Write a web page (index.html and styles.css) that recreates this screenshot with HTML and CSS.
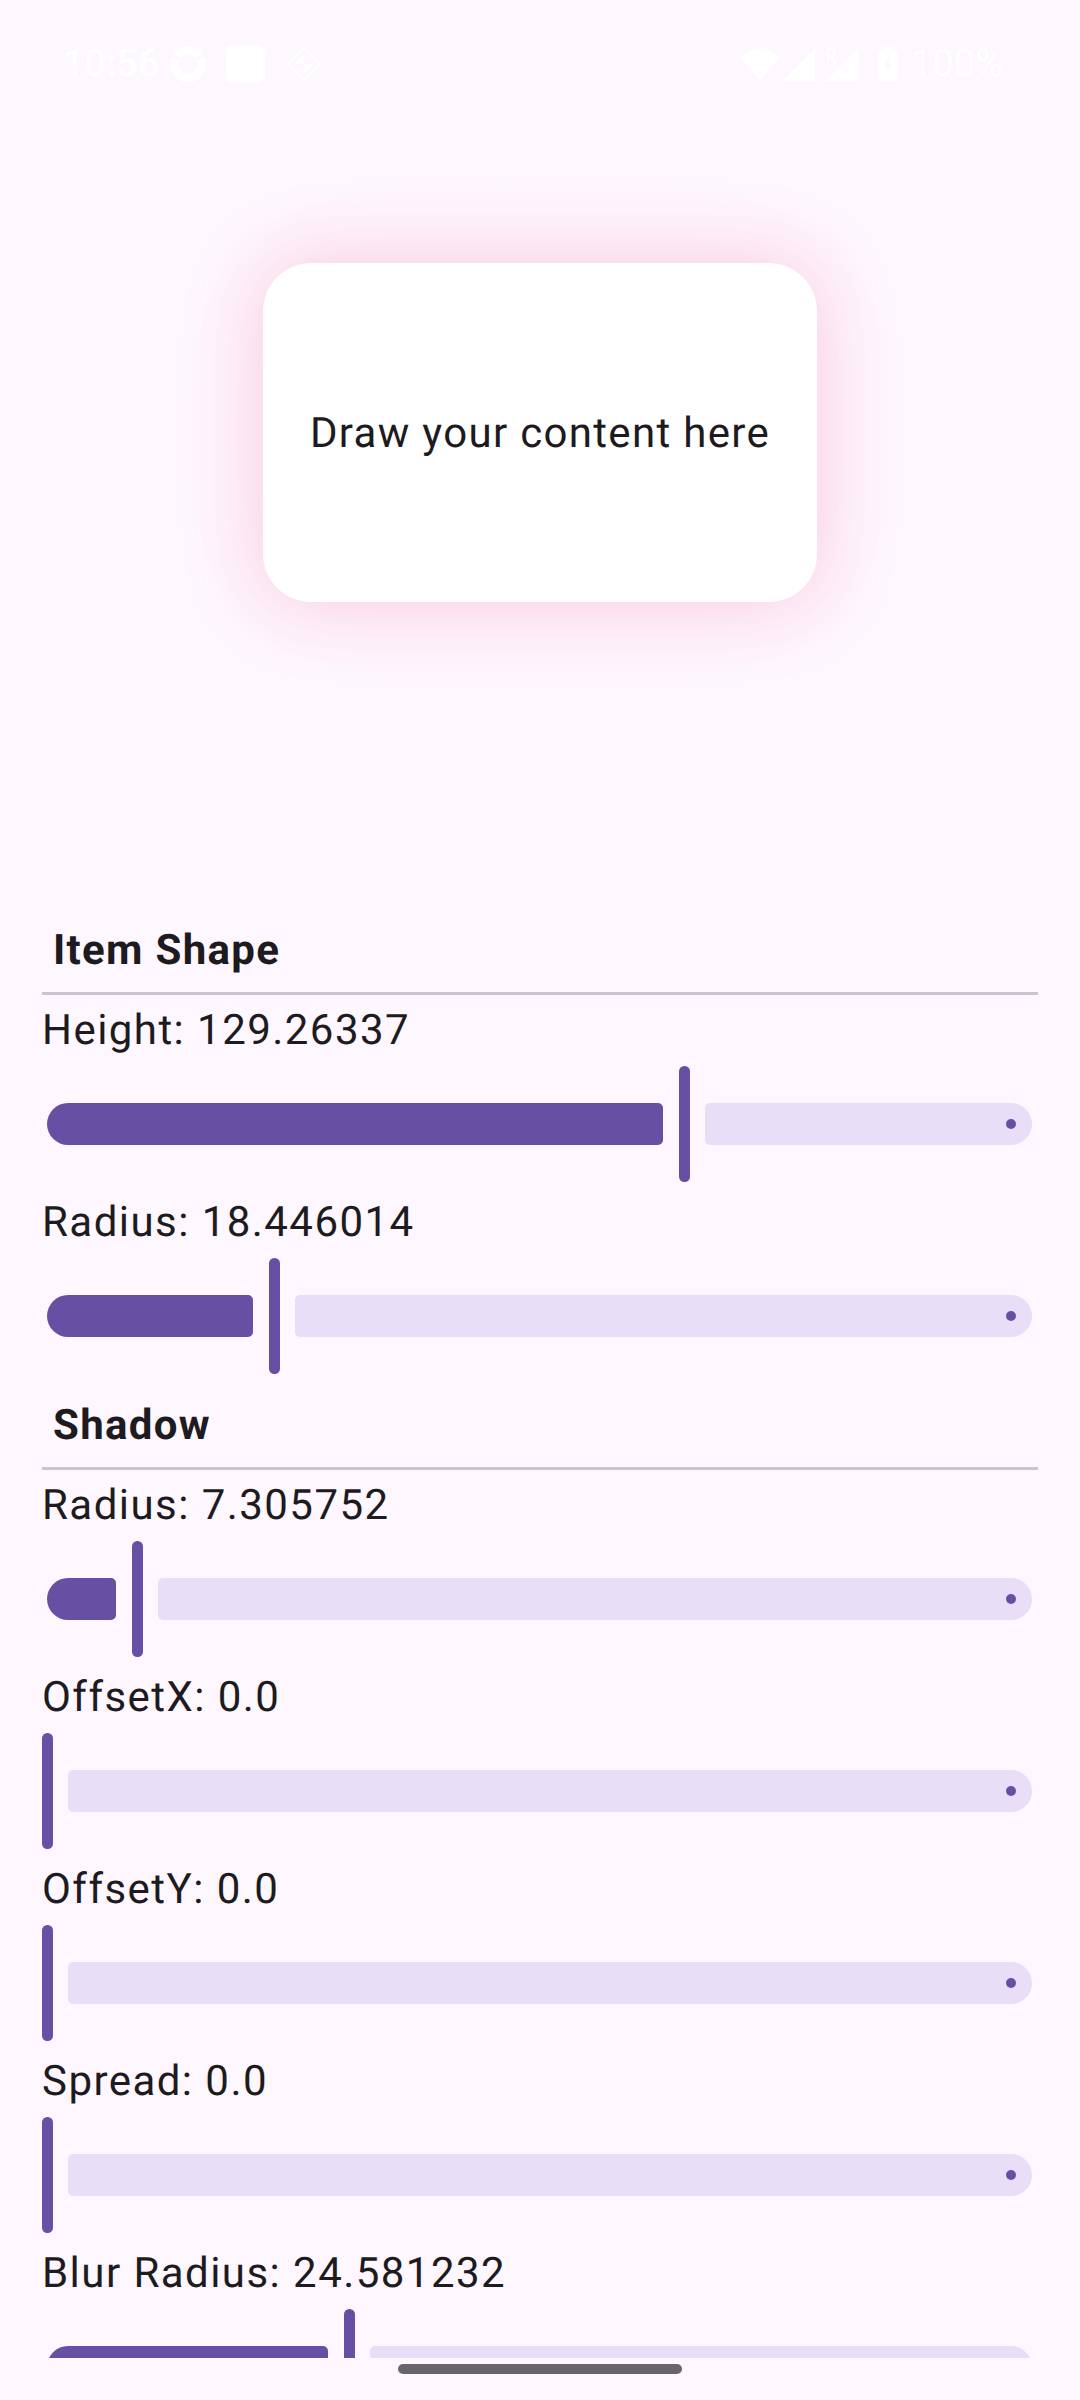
FILE: index.html
```html
<!DOCTYPE html>
<html lang="en">
<head>
<meta charset="utf-8">
<title>Shadow demo</title>
<link rel="stylesheet" href="styles.css">
</head>
<body>
<div class="screen">
  <header class="status-bar">
    <div class="status-left">
      <span class="clock">10:56</span>
      <svg class="ic-ring" width="36" height="36" viewBox="0 0 36 36"><path d="M6.940 10.260A13.500 13.500 0 0 1 29.060 10.260M30.240 12.300A13.500 13.500 0 1 1 5.760 12.300" fill="none" stroke="#fff" stroke-width="9"/></svg>
      <span class="ic-square"></span>
      <svg class="ic-diamond" width="36" height="36" viewBox="0 0 36 36"><path d="M18 2 34 18 18 34 2 18Z" fill="none" stroke="#fff" stroke-width="2.500" stroke-linejoin="round"/><path d="M18 8V18H8ZM28 18H18V28ZM19.500 9.500 24 14H19.500ZM16.500 26.500 12 22H16.500Z" fill="#fff"/></svg>
    </div>
    <div class="status-right">
      <svg class="ic-wifi" width="40" height="32" viewBox="0 0 40 32"><path d="M0 9.500C11-3 29-3 40 9.500L20 32Z" fill="#fff"/></svg>
      <svg class="ic-signal" width="33" height="33" viewBox="0 0 33 33"><path d="M33 0V33H0Z" fill="#fff"/></svg>
      <span class="net-wrap">
        <span class="roaming">R</span>
        <svg class="ic-signal" width="33" height="33" viewBox="0 0 33 33"><path d="M33 0V33H0Z" fill="#fff"/></svg>
      </span>
      <svg class="ic-battery" width="20" height="34" viewBox="0 0 20 34"><path fill-rule="evenodd" d="M6 0H14V2.500H18A2 2 0 0 1 20 4.500V32A2 2 0 0 1 18 34H2A2 2 0 0 1 0 32V4.500A2 2 0 0 1 2 2.500H6ZM11.500 9 5.500 20H9.500L7.500 29 14.500 16.500H10.500Z" fill="#fff"/></svg>
      <span class="battery-text">100%</span>
    </div>
  </header>

  <section class="preview">
    <div class="card">Draw your content here</div>
  </section>

  <main class="controls">
    <h2 class="section-title">Item Shape</h2>
    <hr class="divider">
    <div class="row">
      <p class="label">Height: 129.26337</p>
      <div class="slider"><span class="active" style="width:616px"></span><span class="thumb"></span><span class="inactive"></span></div>
    </div>
    <div class="row">
      <p class="label">Radius: 18.446014</p>
      <div class="slider"><span class="active" style="width:206px"></span><span class="thumb"></span><span class="inactive"></span></div>
    </div>

    <h2 class="section-title">Shadow</h2>
    <hr class="divider">
    <div class="row">
      <p class="label">Radius: 7.305752</p>
      <div class="slider"><span class="active" style="width:69px"></span><span class="thumb"></span><span class="inactive"></span></div>
    </div>
    <div class="row">
      <p class="label">OffsetX: 0.0</p>
      <div class="slider"><span class="thumb"></span><span class="inactive"></span></div>
    </div>
    <div class="row">
      <p class="label">OffsetY: 0.0</p>
      <div class="slider"><span class="thumb"></span><span class="inactive"></span></div>
    </div>
    <div class="row">
      <p class="label">Spread: 0.0</p>
      <div class="slider"><span class="thumb"></span><span class="inactive"></span></div>
    </div>
    <div class="row">
      <p class="label">Blur Radius: 24.581232</p>
      <div class="slider"><span class="active" style="width:281px"></span><span class="thumb"></span><span class="inactive"></span></div>
    </div>
  </main>

  <div class="nav-bar"><span class="nav-pill"></span></div>
</div>
</body>
</html>
```

FILE: styles.css
```css
* { box-sizing: border-box; }
html, body { margin: 0; padding: 0; background: #fef7ff; }
.screen {
  width: 1080px;
  height: 2400px;
  display: flex;
  flex-direction: column;
  overflow: hidden;
  background: #fef7ff;
  color: #1d1b20;
  font-family: Roboto, "Noto Sans", sans-serif;
  text-rendering: geometricPrecision;
}

/* status bar */
.status-bar {
  height: 130px;
  flex: none;
  padding: 45px 77px 0 63px;
  display: flex;
  justify-content: space-between;
  align-items: flex-start;
  color: #fff;
}
.status-left, .status-right { display: flex; align-items: center; height: 38px; }
.clock { font-size: 38px; line-height: 40px; font-weight: 500; width: 107px; }
.ic-ring { margin-right: 20px; }
.ic-square { width: 39px; height: 38px; background: #fff; border-radius: 7px; margin-right: 21px; }
.ic-wifi { margin-right: 2px; }
.net-wrap { position: relative; display: flex; margin-left: 11px; margin-right: 19px; }
.roaming {
  position: absolute;
  left: 0;
  top: -3px;
  font-size: 23px;
  line-height: 24px;
  font-weight: 500;
  color: #fff;
  transform: scaleX(0.72);
  transform-origin: left center;
}
.ic-battery { margin-right: 13px; }
.battery-text { font-size: 38px; line-height: 40px; font-weight: 400; }

/* preview */
.preview {
  height: 774px;
  flex: none;
  padding-top: 133px;
  display: flex;
  justify-content: center;
  align-items: flex-start;
}
.card {
  width: 554px;
  height: 339px;
  padding-top: 2px;
  background: #fff;
  border-radius: 48px;
  box-shadow: 0 0 76px 8px rgba(233, 30, 99, 0.17), 0 0 150px 12px rgba(233, 30, 99, 0.02);
  display: flex;
  align-items: center;
  justify-content: center;
  font-size: 42px;
  line-height: 66px;
  letter-spacing: 1.3125px;
}

/* controls */
.controls {
  height: 1454px;
  flex: none;
  overflow: hidden;
  padding: 0 42px;
}
.section-title {
  margin: 0;
  height: 88px;
  padding: 19px 0 0 11px;
  font-size: 42px;
  line-height: 55px;
  font-weight: 700;
  letter-spacing: 1.3125px;
}
.divider { margin: 0; border: 0; height: 3px; background: #cac4d0; }
.label {
  margin: 0;
  height: 66px;
  font-size: 42px;
  line-height: 71px;
  letter-spacing: 1.45px;
}
.slider { height: 126px; display: flex; align-items: center; }
.active {
  height: 42px;
  margin-left: 5px;
  margin-right: 16px;
  background: #6750a4;
  border-radius: 21px 5px 5px 21px;
  flex: none;
}
.thumb { width: 10.5px; height: 115.5px; background: #6750a4; border-radius: 5.25px; flex: none; margin-right: 15.75px; }
.inactive {
  position: relative;
  flex: 1;
  height: 42px;
  margin-right: 6px;
  background: #e8def8;
  border-radius: 5px 21px 21px 5px;
}
.inactive::after {
  content: "";
  position: absolute;
  right: 15.75px;
  top: 15.75px;
  width: 10.5px;
  height: 10.5px;
  border-radius: 50%;
  background: #6750a4;
}

/* nav */
.nav-bar { flex: 1; display: flex; justify-content: center; padding-top: 6px; }
.nav-pill { width: 284px; height: 10px; border-radius: 5px; background: #69666b; }
```
